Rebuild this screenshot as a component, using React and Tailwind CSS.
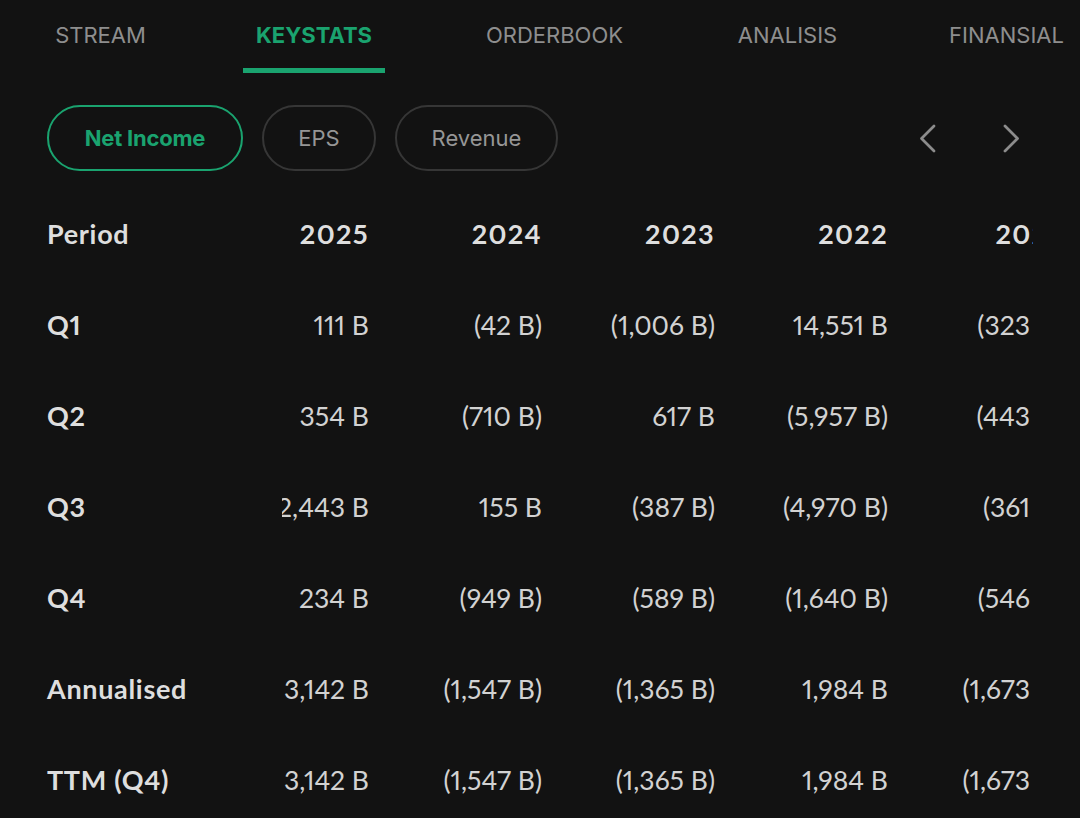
import React, { useState } from 'react';

const tabs = [
  { label: 'STREAM', w: 'w-[117px]' },
  { label: 'KEYSTATS', w: 'w-[142px]' },
  { label: 'ORDERBOOK', w: 'w-[171px]' },
  { label: 'ANALISIS', w: 'w-[127px]' },
  { label: 'FINANSIAL', w: 'w-[143px]' },
];

const metrics = [
  { label: 'Net Income', w: 'w-[196px]' },
  { label: 'EPS', w: 'w-[114px]' },
  { label: 'Revenue', w: 'w-[163px]' },
];

const years = ['2025', '2024', '2023', '2022', '2021'];

// nilai per periode, urutan kolom sama dengan years
const rows = [
  { period: 'Q1', values: ['111 B', '(42 B)', '(1,006 B)', '14,551 B', '(323 B)'] },
  { period: 'Q2', values: ['354 B', '(710 B)', '617 B', '(5,957 B)', '(443 B)'] },
  { period: 'Q3', values: ['2,443 B', '155 B', '(387 B)', '(4,970 B)', '(361 B)'] },
  { period: 'Q4', values: ['234 B', '(949 B)', '(589 B)', '(1,640 B)', '(546 B)'] },
  { period: 'Annualised', values: ['3,142 B', '(1,547 B)', '(1,365 B)', '1,984 B', '(1,673 B)'] },
  { period: 'TTM (Q4)', values: ['3,142 B', '(1,547 B)', '(1,365 B)', '1,984 B', '(1,673 B)'] },
];

function Cell({ children, first, bold }) {
  return (
    <div
      className={`${first ? 'w-[87px]' : 'w-[173px]'} shrink-0 flex justify-end whitespace-nowrap ${
        bold ? 'font-bold text-[#dedede] tracking-[0.05em]' : 'text-[#d2d2d2] text-[26.5px]'
      }`}
    >
      {children}
    </div>
  );
}

function Row({ label, values, header }) {
  return (
    <div className="flex items-center h-[91px] pl-[47px] text-[27px] proportional-nums">
      <div className="w-[235px] shrink-0 font-bold text-[#dedede] tracking-[0.025em]">{label}</div>
      <div className="w-[751px] overflow-hidden flex">
        {values.map((v, i) => (
          <Cell key={i} first={i === 0} bold={header}>
            {v}
          </Cell>
        ))}
      </div>
    </div>
  );
}

function Chevron({ dir }) {
  return (
    <svg width="18" height="29" viewBox="0 0 18 29" fill="none">
      <path
        d={dir === 'left' ? 'M15 2 L2.5 14.5 L15 27' : 'M3 2 L15.5 14.5 L3 27'}
        stroke="#8c8c8c"
        strokeWidth="2.8"
        strokeLinecap="round"
        strokeLinejoin="round"
      />
    </svg>
  );
}

export default function App() {
  const [activeTab, setActiveTab] = useState('KEYSTATS');
  const [activeMetric, setActiveMetric] = useState('Net Income');

  return (
    <div className="w-[1080px] h-[818px] overflow-hidden bg-[#121212]">
      {/* Tabs */}
      <div className="flex gap-[84px] pl-[42px] font-['Inter',sans-serif] whitespace-nowrap">
        {tabs.map((t) => {
          const active = t.label === activeTab;
          return (
            <button
              key={t.label}
              onClick={() => setActiveTab(t.label)}
              className={`${t.w} shrink-0 h-[73px] flex items-center justify-center pt-[3px] text-[22px] border-b-[5px] ${
                active
                  ? 'border-[#1aa36f] text-[#1aa36f] font-bold'
                  : 'border-transparent text-[#8e8e8e]'
              }`}
            >
              {t.label}
            </button>
          );
        })}
      </div>

      {/* Metric pills + navigasi */}
      <div className="flex items-center mt-[32px] pl-[47px] pr-[60px] font-['Inter',sans-serif]">
        <div className="flex gap-[19px]">
          {metrics.map((m) => {
            const active = m.label === activeMetric;
            return (
              <button
                key={m.label}
                onClick={() => setActiveMetric(m.label)}
                className={`${m.w} h-[66px] rounded-full border-2 text-[22px] flex items-center justify-center ${
                  active
                    ? 'border-[#1aa36f] text-[#1aa36f] font-bold tracking-[-0.01em]'
                    : 'border-[#363636] text-[#969696]'
                }`}
              >
                {m.label}
              </button>
            );
          })}
        </div>
        <div className="ml-auto flex items-center gap-[65px]">
          <Chevron dir="left" />
          <Chevron dir="right" />
        </div>
      </div>

      {/* Tabel */}
      <div className="mt-[18px] font-['Lato',sans-serif]">
        <Row label="Period" values={years} header />
        {rows.map((r) => (
          <Row key={r.period} label={r.period} values={r.values} />
        ))}
      </div>
    </div>
  );
}
